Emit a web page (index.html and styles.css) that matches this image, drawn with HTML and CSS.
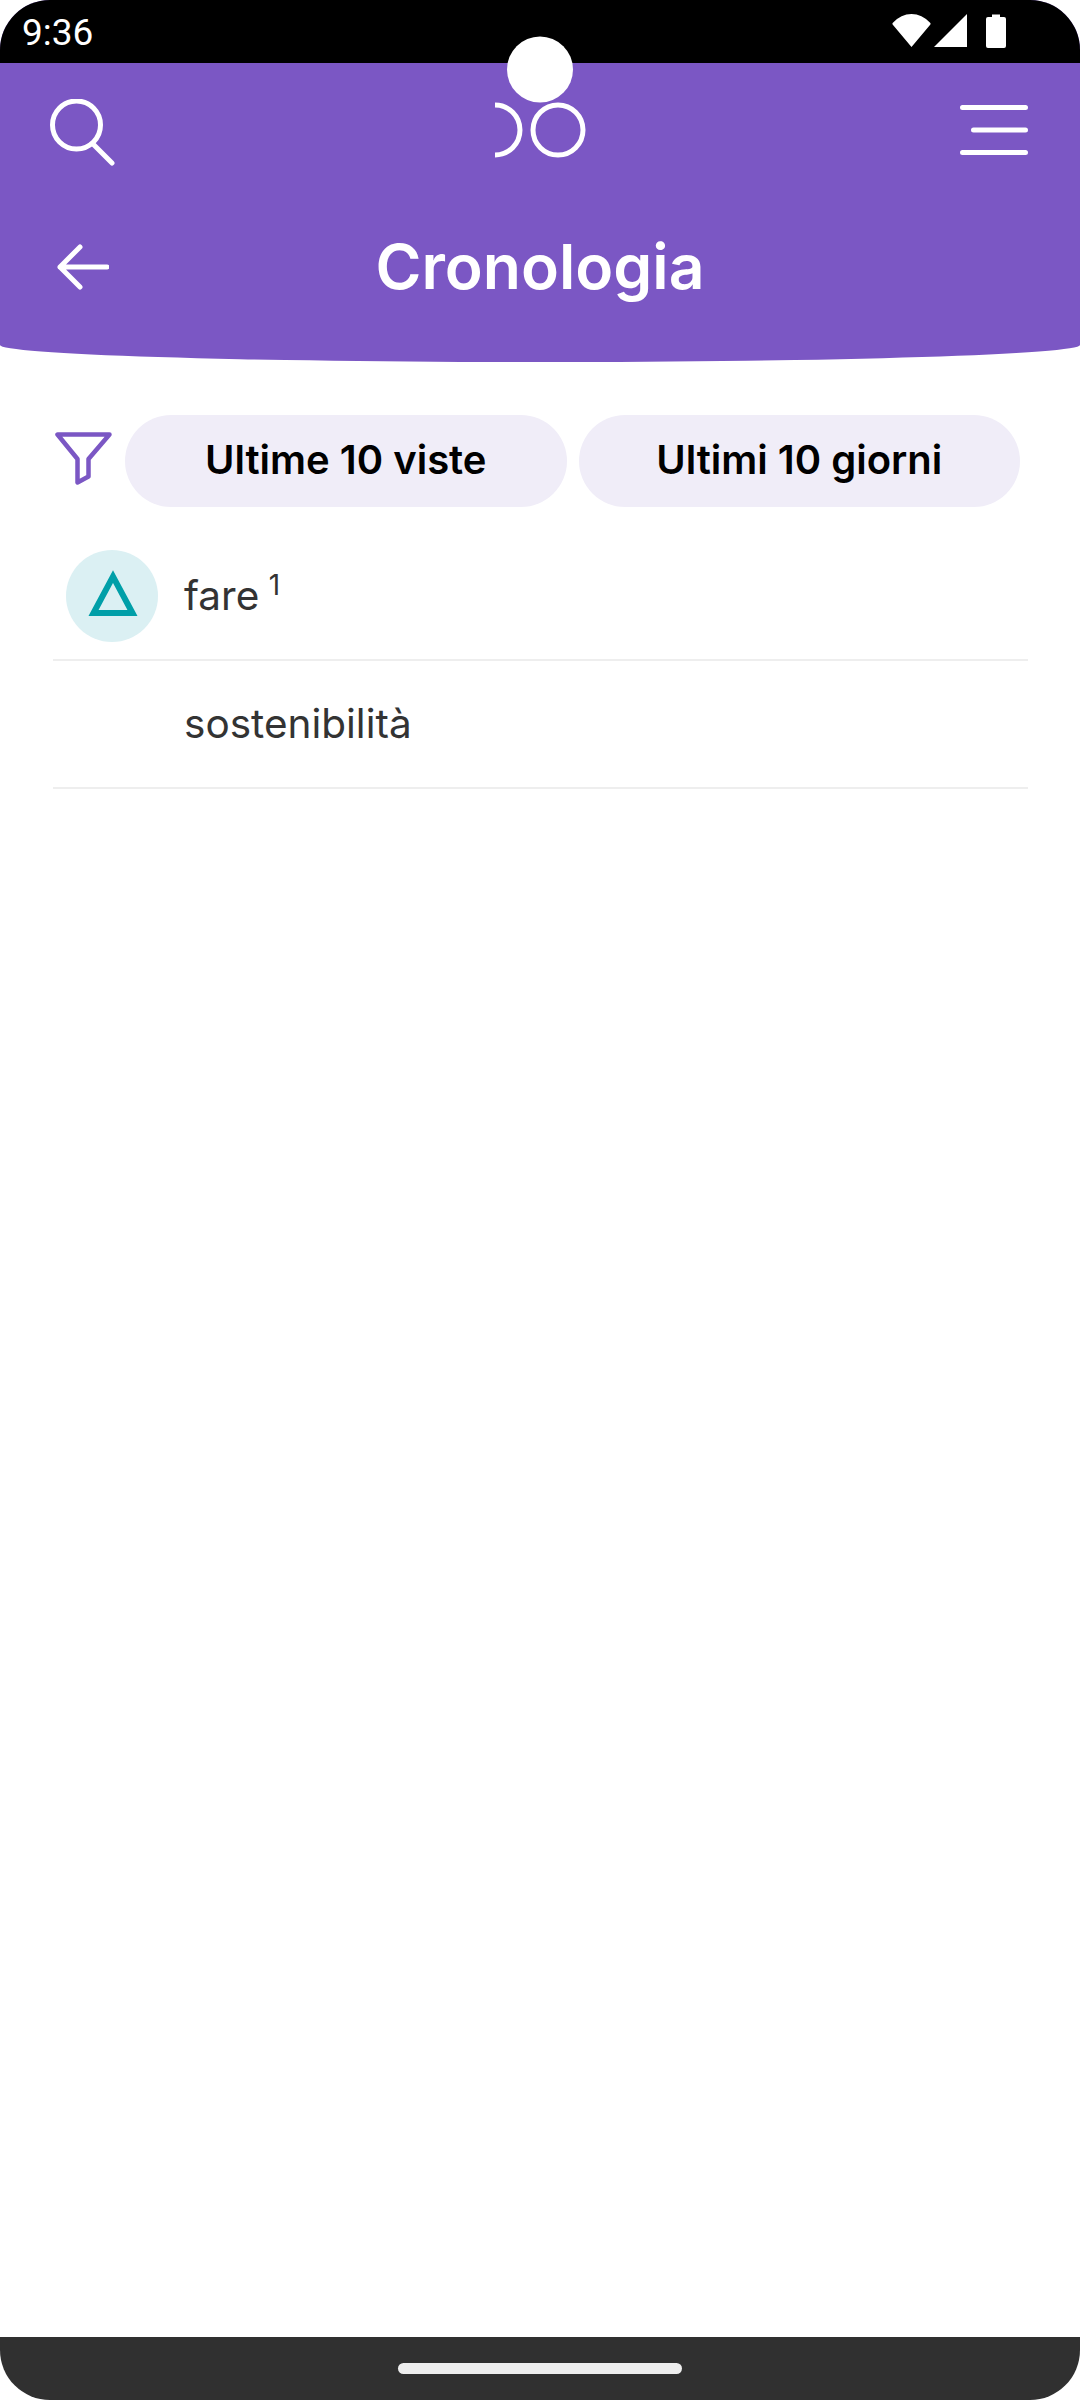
FILE: index.html
```html
<!DOCTYPE html>
<html lang="it">
<head>
<meta charset="utf-8">
<title>Cronologia</title>
<link rel="stylesheet" href="styles.css">
</head>
<body>
<div class="screen">
  <header class="header">
    <div class="status">
      <span class="time">9:36</span>
      <div class="status-icons">
        <svg class="ic-wifi" width="39" height="33" viewBox="0 0 39 33"><path d="M19.5 33 L.6 10.5 Q0 9.6 .9 8.8 Q9 0 19.5 0 Q30 0 38.1 8.8 Q39 9.6 38.4 10.5 Z"/></svg>
        <svg class="ic-signal" width="33" height="33" viewBox="0 0 33 33"><path d="M0 33 L33 0 V33 Z"/></svg>
        <svg class="ic-battery" width="20" height="34" viewBox="0 0 20 34"><path d="M6 0.5 H14 V3 H18 Q20 3 20 5 V32 Q20 34 18 34 H2 Q0 34 0 32 V5 Q0 3 2 3 H6 Z"/></svg>
      </div>
    </div>
    <svg class="logo" width="92" height="123" viewBox="0 0 92 123">
      <circle class="logo-dot" cx="46" cy="33.500" r="33"/>
      <path class="logo-line" d="M1 69 A25 25 0 0 1 1 119"/>
      <circle class="logo-line" cx="64" cy="94" r="25"/>
    </svg>
    <nav class="nav">
      <svg class="ic-line ic-search" width="65" height="67" viewBox="0 0 65 67"><circle cx="26.500" cy="26" r="24"/><path d="M43 45 L62 64"/></svg>
      <svg class="ic-line" width="68" height="50" viewBox="0 0 68 50"><path d="M2.500 2.500 H65.500 M13.500 25 H65.500 M2.500 47.500 H65.500"/></svg>
    </nav>
    <div class="titlebar">
      <svg class="ic-line" width="52" height="46" viewBox="0 0 52 46"><path d="M23 3 L3 23 L23 43 M3 23 H50"/></svg>
      <h1 class="title">Cronologia</h1>
    </div>
  </header>

  <div class="filters">
    <svg class="ic-filter" width="57" height="53" viewBox="0 0 57 53"><path d="M2.500 2.500 H54.500 L33.500 27 V44.500 L22.500 50.500 V27 Z"/></svg>
    <button class="pill">Ultime 10 viste</button>
    <button class="pill">Ultimi 10 giorni</button>
  </div>

  <ul class="list">
    <li class="row">
      <span class="avatar"><svg width="92" height="92" viewBox="0 0 92 92"><polygon class="tri" points="27.500,63 66.500,63 47,26.500"/></svg></span>
      <span class="word">fare <sup class="num">1</sup></span>
    </li>
    <li class="row">
      <span class="avatar avatar-empty"></span>
      <span class="word">sostenibilità</span>
    </li>
  </ul>

  <footer class="navbar"><span class="handle"></span></footer>
</div>
</body>
</html>
```

FILE: styles.css
```css
* { box-sizing: border-box; }
html, body { margin: 0; padding: 0; background: #fff; }
.screen {
  width: 1080px;
  height: 2400px;
  border-radius: 50px;
  overflow: hidden;
  background: #fff;
  display: flex;
  flex-direction: column;
  font-family: Inter, "Liberation Sans", sans-serif;
}
.header {
  position: relative;
  height: 362px;
  flex: none;
  background: #7b57c4;
  border-radius: 0 0 50% 50% / 0 0 17px 17px;
}
.status {
  height: 63px;
  background: #000;
  display: flex;
  justify-content: space-between;
  padding: 0 74px 0 22px;
}
.time {
  font-family: Roboto, sans-serif;
  font-size: 37px;
  line-height: 43px;
  margin-top: 11px;
  color: #fff;
}
.status-icons { display: flex; align-items: flex-start; padding-top: 14px; }
.status-icons svg { fill: #fff; display: block; }
.ic-signal { margin-left: 3px; }
.ic-battery { margin-left: 19px; }
.logo { position: absolute; left: 494px; top: 36px; }
.logo-dot { fill: #fff; }
.logo-line { fill: none; stroke: #fff; stroke-width: 5; }
.ic-line { fill: none; stroke: #fff; stroke-width: 5; stroke-linecap: round; stroke-linejoin: round; display: block; flex: none; }
.ic-search { margin-top: 5px; }
.nav {
  height: 134px;
  padding: 0 52px 0 50px;
  display: flex;
  justify-content: space-between;
  align-items: center;
}
.titlebar {
  height: 140px;
  padding: 0 57px;
  display: grid;
  grid-template-columns: 1fr auto 1fr;
  align-items: center;
}
.title {
  margin: 0;
  color: #fff;
  font-size: 62.4px;
  font-weight: 600;
  line-height: 70px;
}
.filters {
  margin-top: 53px;
  padding: 0 60px 0 55px;
  display: flex;
  align-items: center;
  gap: 12px;
}
.ic-filter { fill: none; stroke: #7b57c4; stroke-width: 4.500; stroke-linejoin: round; flex: none; margin: -6px 1px 0 0; }
.pill {
  flex: 1;
  height: 92px;
  border: 0;
  border-radius: 46px;
  background: #f0edf8;
  color: #000;
  font-family: inherit;
  font-size: 40px;
  font-weight: 600;
  padding: 0 0 3px;
}
.list {
  list-style: none;
  margin: 26px 52px 0 53px;
  padding: 0;
}
.row {
  height: 128px;
  padding-left: 13px;
  border-bottom: 2px solid #eeeeee;
  display: flex;
  align-items: center;
  gap: 26px;
}
.avatar {
  width: 92px;
  height: 92px;
  border-radius: 50%;
  background: #dbf0f3;
  flex: none;
}
.avatar svg { display: block; }
.avatar-empty { background: transparent; }
.tri { fill: none; stroke: #009fa8; stroke-width: 6; }
.word {
  font-size: 40.500px;
  line-height: 46px;
  color: #333333;
}
.num {
  font-size: 28px;
  line-height: 0;
  vertical-align: 15px;
  margin-left: -2px;
}
.navbar {
  margin-top: auto;
  height: 63px;
  flex: none;
  background: #303030;
  display: flex;
  justify-content: center;
  padding-top: 26px;
}
.handle {
  width: 284px;
  height: 11px;
  border-radius: 6px;
  background: #eeeeee;
}
```
